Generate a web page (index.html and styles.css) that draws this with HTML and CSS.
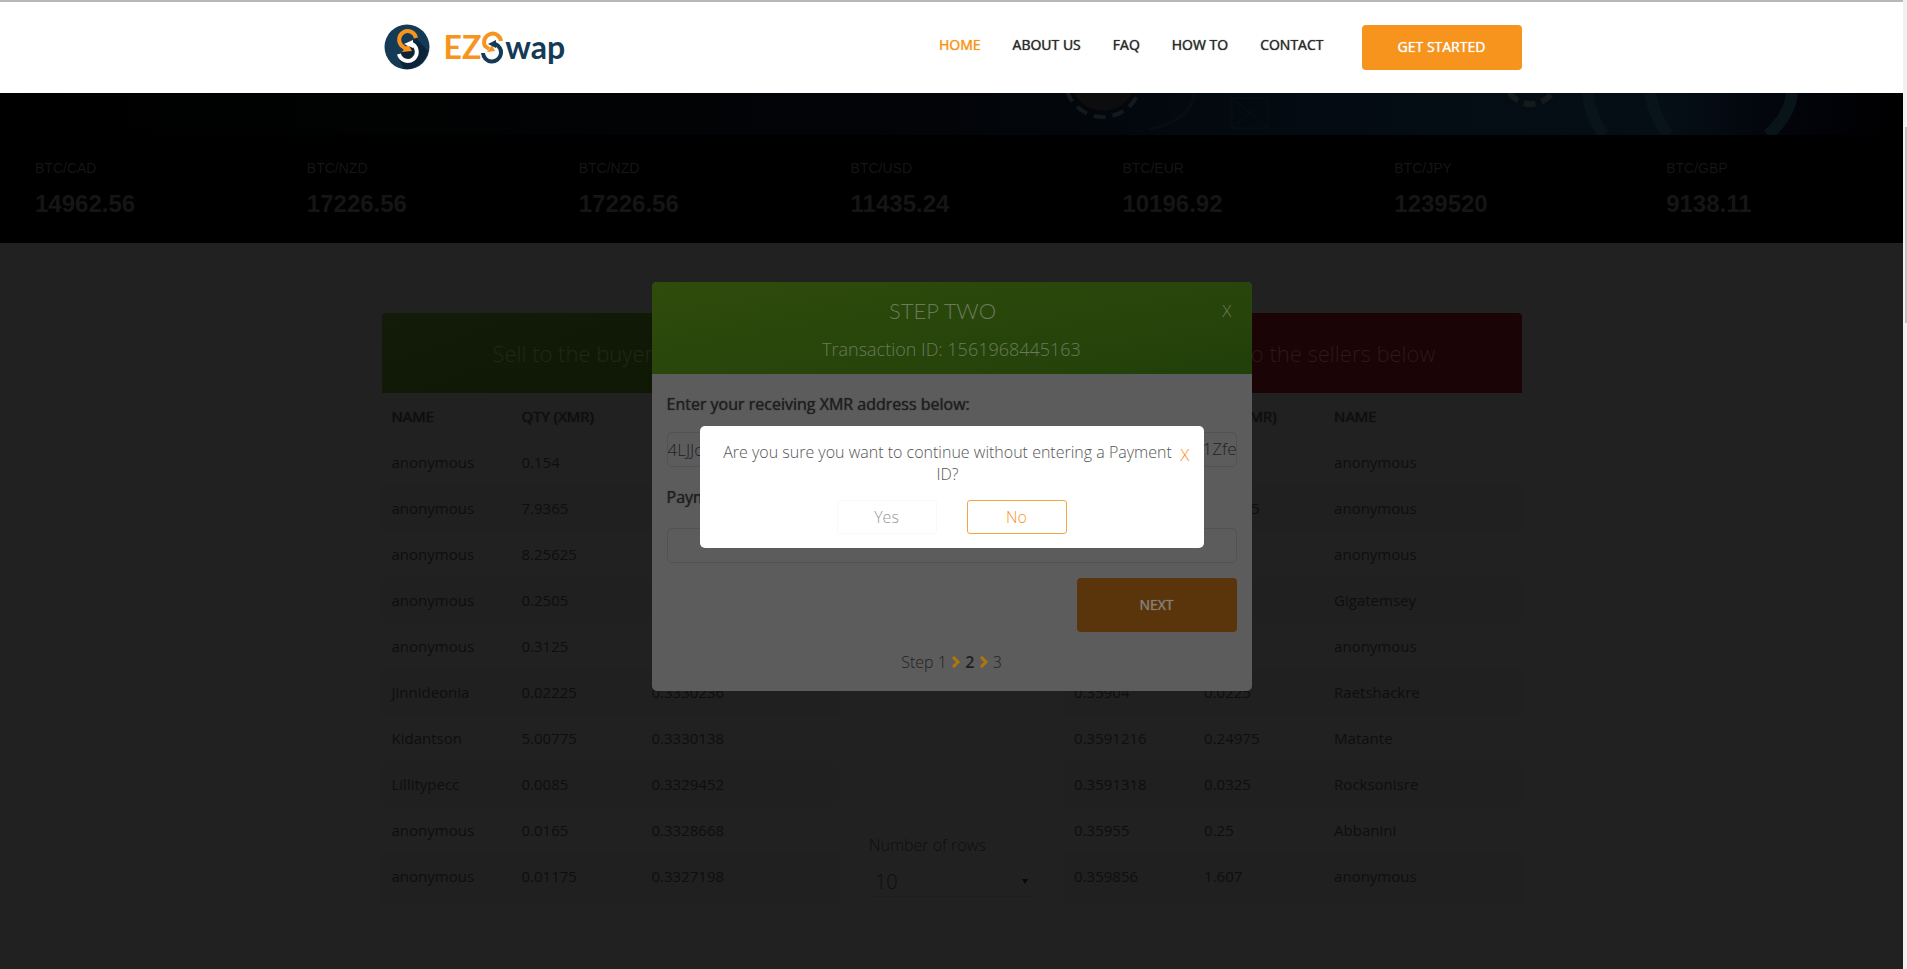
FILE: index.html
```
<!DOCTYPE html>
<html lang="en">
<head>
<meta charset="utf-8">
<title>EZSwap</title>
<link rel="stylesheet" href="styles.css">
</head>
<body>
<div class="layout">
<div class="page">
  <header class="header">
    <div class="container header-row">
      <a class="brand" href="#" aria-label="EZSwap">
        <svg class="brand-mark" viewBox="0 0 46 46" aria-hidden="true">
          <circle cx="23" cy="23" r="22.500" fill="#153a56"/>
          <path d="M32 14 L44 27 A22.500 22.500 0 0 1 20 45 L14 33 Z" fill="#0c2438"/>
          <path d="M32 14 A8.500 8.500 0 1 0 18 22 L22 25" fill="none" stroke="#f7941e" stroke-width="4"/>
          <path d="M18 28 L24 20 L28 27 Z" fill="#f7941e"/>
          <path d="M15 30 A9 9 0 1 0 28 20" fill="none" stroke="#fff" stroke-width="4"/>
          <path d="M20 20 L29 16 L29 24 Z" fill="#fff"/>
        </svg>
        <span class="brand-name"><span class="brand-ez">EZ</span><svg class="brand-s" viewBox="0 0 22 34" aria-hidden="true">
          <path d="M20 11 A8.500 8.500 0 1 0 4 16 L8 19" fill="none" stroke="#f7941e" stroke-width="4"/>
          <path d="M6 22 L11 15 L14 21 Z" fill="#f7941e"/>
          <path d="M2 23 A9 9 0 1 0 14 14" fill="none" stroke="#153a56" stroke-width="4"/>
          <path d="M7 14 L15 10 L15 18 Z" fill="#153a56"/>
        </svg><span class="brand-wap">wap</span></span>
      </a>
      <nav class="nav">
        <a class="active" href="#">HOME</a>
        <a href="#">ABOUT US</a>
        <a href="#">FAQ</a>
        <a href="#">HOW TO</a>
        <a href="#">CONTACT</a>
        <button class="btn start" type="button">GET STARTED</button>
      </nav>
    </div>
  </header>

  <div class="banner">
    <svg class="coin" viewBox="0 0 1903 42" preserveAspectRatio="none" aria-hidden="true">
      <circle cx="1103" cy="-14" r="32" fill="#0d0d0e"/>
      <circle cx="1103" cy="-14" r="38" fill="none" stroke="#15191b" stroke-width="4" stroke-dasharray="12 7"/>
      <path d="M1195 0 Q1190 28 1150 36" fill="none" stroke="#070e13" stroke-width="3"/>
      <path d="M1232 5 H1268 V35 H1232 Z M1232 5 L1268 35 M1268 5 L1232 35" fill="none" stroke="#081016"/>
      <circle cx="1531" cy="-15" r="26" fill="none" stroke="#151a1a" stroke-width="6" stroke-dasharray="12 6"/>
      <path d="M1588 0 Q1590 24 1604 42 M1650 0 Q1655 25 1668 42 M1792 0 Q1790 22 1768 42" fill="none" stroke="#08131a" stroke-width="12"/>
    </svg>
  </div>

  <section class="ticker">
    <div class="quote"><span>BTC/CAD</span><strong>14962.56</strong></div>
    <div class="quote"><span>BTC/NZD</span><strong>17226.56</strong></div>
    <div class="quote"><span>BTC/NZD</span><strong>17226.56</strong></div>
    <div class="quote"><span>BTC/USD</span><strong>11435.24</strong></div>
    <div class="quote"><span>BTC/EUR</span><strong>10196.92</strong></div>
    <div class="quote"><span>BTC/JPY</span><strong>1239520</strong></div>
    <div class="quote"><span>BTC/GBP</span><strong>9138.11</strong></div>
  </section>

  <main class="container market">
    <section class="offers">
      <h2 class="offers-title sell">Sell to the buyers below</h2>
      <table class="book">
        <thead><tr><th>NAME</th><th>QTY (XMR)</th><th></th></tr></thead>
        <tbody>
          <tr><td>anonymous</td><td>0.154</td><td></td></tr>
          <tr><td>anonymous</td><td>7.9365</td><td></td></tr>
          <tr><td>anonymous</td><td>8.25625</td><td></td></tr>
          <tr><td>anonymous</td><td>0.2505</td><td></td></tr>
          <tr><td>anonymous</td><td>0.3125</td><td></td></tr>
          <tr><td>Jinnideonia</td><td>0.02225</td><td>0.3330236</td></tr>
          <tr><td>Kidantson</td><td>5.00775</td><td>0.3330138</td></tr>
          <tr><td>Lillitypecc</td><td>0.0085</td><td>0.3329452</td></tr>
          <tr><td>anonymous</td><td>0.0165</td><td>0.3328668</td></tr>
          <tr><td>anonymous</td><td>0.01175</td><td>0.3327198</td></tr>
        </tbody>
      </table>
    </section>

    <div class="rows">
      <label for="rows">Number of rows</label>
      <div class="select-wrap"><select id="rows"><option>10</option></select></div>
    </div>

    <section class="offers">
      <h2 class="offers-title buy">Respond to the sellers below</h2>
      <table class="book">
        <thead><tr><th></th><th>QTY (XMR)</th><th>NAME</th></tr></thead>
        <tbody>
          <tr><td></td><td></td><td>anonymous</td></tr>
          <tr><td></td><td>0.10275</td><td>anonymous</td></tr>
          <tr><td></td><td></td><td>anonymous</td></tr>
          <tr><td></td><td></td><td>Gigatemsey</td></tr>
          <tr><td></td><td></td><td>anonymous</td></tr>
          <tr><td>0.35904</td><td>0.0225</td><td>Raetshackre</td></tr>
          <tr><td>0.3591216</td><td>0.24975</td><td>Matante</td></tr>
          <tr><td>0.3591318</td><td>0.0325</td><td>Rocksonisre</td></tr>
          <tr><td>0.35955</td><td>0.25</td><td>Abbanini</td></tr>
          <tr><td>0.359856</td><td>1.607</td><td>anonymous</td></tr>
        </tbody>
      </table>
    </section>
  </main>

  <div class="overlay step-layer">
    <section class="step" role="dialog" aria-label="Step two">
      <header class="step-head">
        <h1>STEP TWO</h1>
        <p>Transaction ID: 1561968445163</p>
        <button class="close step-close" type="button">X</button>
      </header>
      <form class="step-body">
        <label for="address">Enter your receiving XMR address below:</label>
        <div class="field">
          <input id="address" type="text" value="4LJJo">
          <span class="field-tail">c1Zfe</span>
        </div>
        <label for="payment">Payment ID:</label>
        <div class="field field-payment"><input id="payment" type="text"></div>
        <button class="btn next" type="button">NEXT</button>
        <p class="steps">Step 1
          <svg viewBox="0 0 10 12" aria-hidden="true"><path d="M2 1 L7 6 L2 11"/></svg>
          <strong>2</strong>
          <svg viewBox="0 0 10 12" aria-hidden="true"><path d="M2 1 L7 6 L2 11"/></svg>
          3</p>
      </form>
    </section>
  </div>

  <div class="overlay confirm-layer">
    <section class="confirm" role="alertdialog" aria-label="Payment ID">
      <p>Are you sure you want to continue without entering a Payment ID?</p>
      <button class="close confirm-close" type="button">X</button>
      <div class="choices">
        <button class="choice yes" type="button">Yes</button>
        <button class="choice no" type="button">No</button>
      </div>
    </section>
  </div>
</div>
<div class="scroll"><div class="scroll-thumb"></div></div>
</div>
</body>
</html>
```
FILE: styles.css
```
* { box-sizing: border-box; }
body {
  margin: 0;
  background: #212121;
  color: #0e0e0e;
  font: 300 15px/22px "Open Sans", "Noto Sans", sans-serif;
  overflow: hidden;
}
h1, h2, p { margin: 0; font-weight: 300; }
a { color: inherit; text-decoration: none; }
button, input, select { font: inherit; color: inherit; }
button { border: 0; background: none; padding: 0; }

.layout { display: flex; min-height: 100vh; }
.page { position: relative; flex: 1; }
.scroll { width: 4px; background: #f1f1f1; padding: 127px 0 0 2px; }
.scroll-thumb { height: 196px; background: #c1c1c1; }
.container { width: 60%; max-width: 1140px; margin: 0 auto; }

.header { background: #fff; border-top: 2px solid #b4b8b6; padding: 22px 0 23px; }
.header-row { display: flex; align-items: center; justify-content: space-between; }
.brand { display: flex; align-items: center; gap: 14px; padding-left: 2px; }
.brand-mark { width: 46px; height: 46px; }
.brand-name {
  display: flex;
  align-items: center;
  color: #153a56;
  font: 700 32px/46px Lato, sans-serif;
}
.brand-ez { color: #f7941e; }
.brand-s { width: 22px; height: 34px; }
.brand-wap { padding-left: 2px; }
.nav { display: flex; align-items: center; gap: 32px; color: #2b2b2b; font: 400 14px/20px "Open Sans", sans-serif; }
.nav a { padding-bottom: 4px; text-shadow: 0 0 1px currentColor; }
.nav .active { color: #f7941e; }
.btn { border-radius: 4px; font-weight: 400; font-size: 14px; text-align: center; text-shadow: 0 0 1px currentColor; }
.start { width: 160px; height: 45px; margin-left: 6px; background: #f7941e; color: #fff; }

.banner {
  height: 42px;
  background: linear-gradient(90deg, #000 0%, #010202 20%, #020408 50%, #03090f 62%, #040c14 75%, #050e15 88%, #020309 95%, #000 100%);
}
.coin { display: block; width: 100%; height: 100%; }

.ticker {
  display: grid;
  grid-template-columns: repeat(7, 1fr);
  height: 108px;
  background: #000;
  color: #151515;
  font-family: "Liberation Sans", Arial, sans-serif;
}
.quote { display: flex; flex-direction: column; gap: 9px; padding: 22px 35px; }
.quote span { font-size: 14px; font-weight: 400; }
.quote strong { font-size: 24px; line-height: 32px; font-weight: 700; }

.market { display: grid; grid-template-columns: 457fr 225fr 457fr; padding-top: 70px; }
.offers-title { height: 80px; border-radius: 4px 4px 0 0; text-align: center; font-size: 22px; line-height: 80px; }
.sell { background: linear-gradient(160deg, #121c08, #0e1604); color: #1f2918; }
.buy { background: #1a0405; color: #2f191a; }
.book { width: 100%; table-layout: fixed; border-collapse: collapse; }
.book th, .book td { height: 46px; padding: 0 10px; text-align: left; }
.book th { font-size: 15px; font-weight: 400; text-shadow: 0 0 1px currentColor; }
.book th:nth-child(-n+2) { width: 130px; }
.book td { font-weight: 400; }
.book tbody tr:nth-child(even) { background: #202020; }
.book tbody tr:last-child td { height: 52px; padding-bottom: 6px; }
.rows { align-self: end; padding: 0 30px 8px; font-size: 16px; }
.rows label { display: block; margin-bottom: 11px; }
.select-wrap { position: relative; }
.select-wrap::after {
  content: "";
  position: absolute;
  right: 6px;
  top: 12px;
  border: 3px solid transparent;
  border-top: 5px solid #080808;
}
.rows select {
  appearance: none;
  width: 100%;
  height: 30px;
  padding: 0 6px;
  border: 0;
  border-bottom: 1px solid #1e1e1e;
  background: none;
  font-size: 20px;
  line-height: 28px;
}

.overlay { position: absolute; inset: 0; display: flex; justify-content: center; align-items: flex-start; }
.step-layer { padding-top: 282px; }
.step { width: 600px; border-radius: 5px; background: #5c5c5c; overflow: hidden; color: #1f1f1f; }
.step-head {
  position: relative;
  padding: 13px 0;
  background: linear-gradient(170deg, #304c0c, #21400a);
  color: #6b7a5c;
  text-align: center;
}
.step-head h1 { font: 300 22px/32px Lato, sans-serif; padding-right: 18px; }
.step-head p { font-size: 18px; line-height: 24px; margin-top: 10px; }
.close { position: absolute; font-size: 17px; line-height: 20px; }
.step-close { top: 19px; right: 20px; }
.step-body { display: flex; flex-direction: column; padding: 17px 15px 16px; }
.step-body label { font-size: 16px; font-weight: 400; line-height: 26px; text-shadow: 0 0 1px currentColor; }
.field { position: relative; margin: 15px 0 17px; }
.field-payment { margin: 18px 0 15px; }
.field input {
  display: block;
  width: 100%;
  height: 35px;
  padding: 0;
  border: 1px solid #525252;
  border-radius: 5px;
  background: transparent;
  font-size: 17px;
}
.field-tail { position: absolute; top: 6px; right: 0; font-size: 17px; }
.next { align-self: flex-end; width: 160px; height: 54px; background: #5a350b; color: #858078; }
.steps { margin: 17px 0 0; text-align: center; font-size: 16px; line-height: 26px; }
.steps strong { font-weight: 600; }
.steps svg { width: 10px; height: 12px; fill: none; stroke: #b0750e; stroke-width: 3; }

.confirm-layer { padding-top: 426px; }
.confirm { position: relative; width: 504px; padding: 15px 18px 14px; border-radius: 5px; background: #fff; color: #555; }
.confirm p { padding-right: 8px; text-align: center; font-size: 16px; line-height: 22px; }
.confirm-close { top: 19px; right: 14px; color: #f7941e; }
.choices { display: flex; justify-content: center; gap: 30px; margin-top: 15px; }
.choice { width: 100px; height: 34px; border: 1px solid #f9f9f9; border-radius: 3px; font-size: 16px; }
.yes { color: #999; }
.no { border-color: #f2a641; color: #f7941e; }
```
